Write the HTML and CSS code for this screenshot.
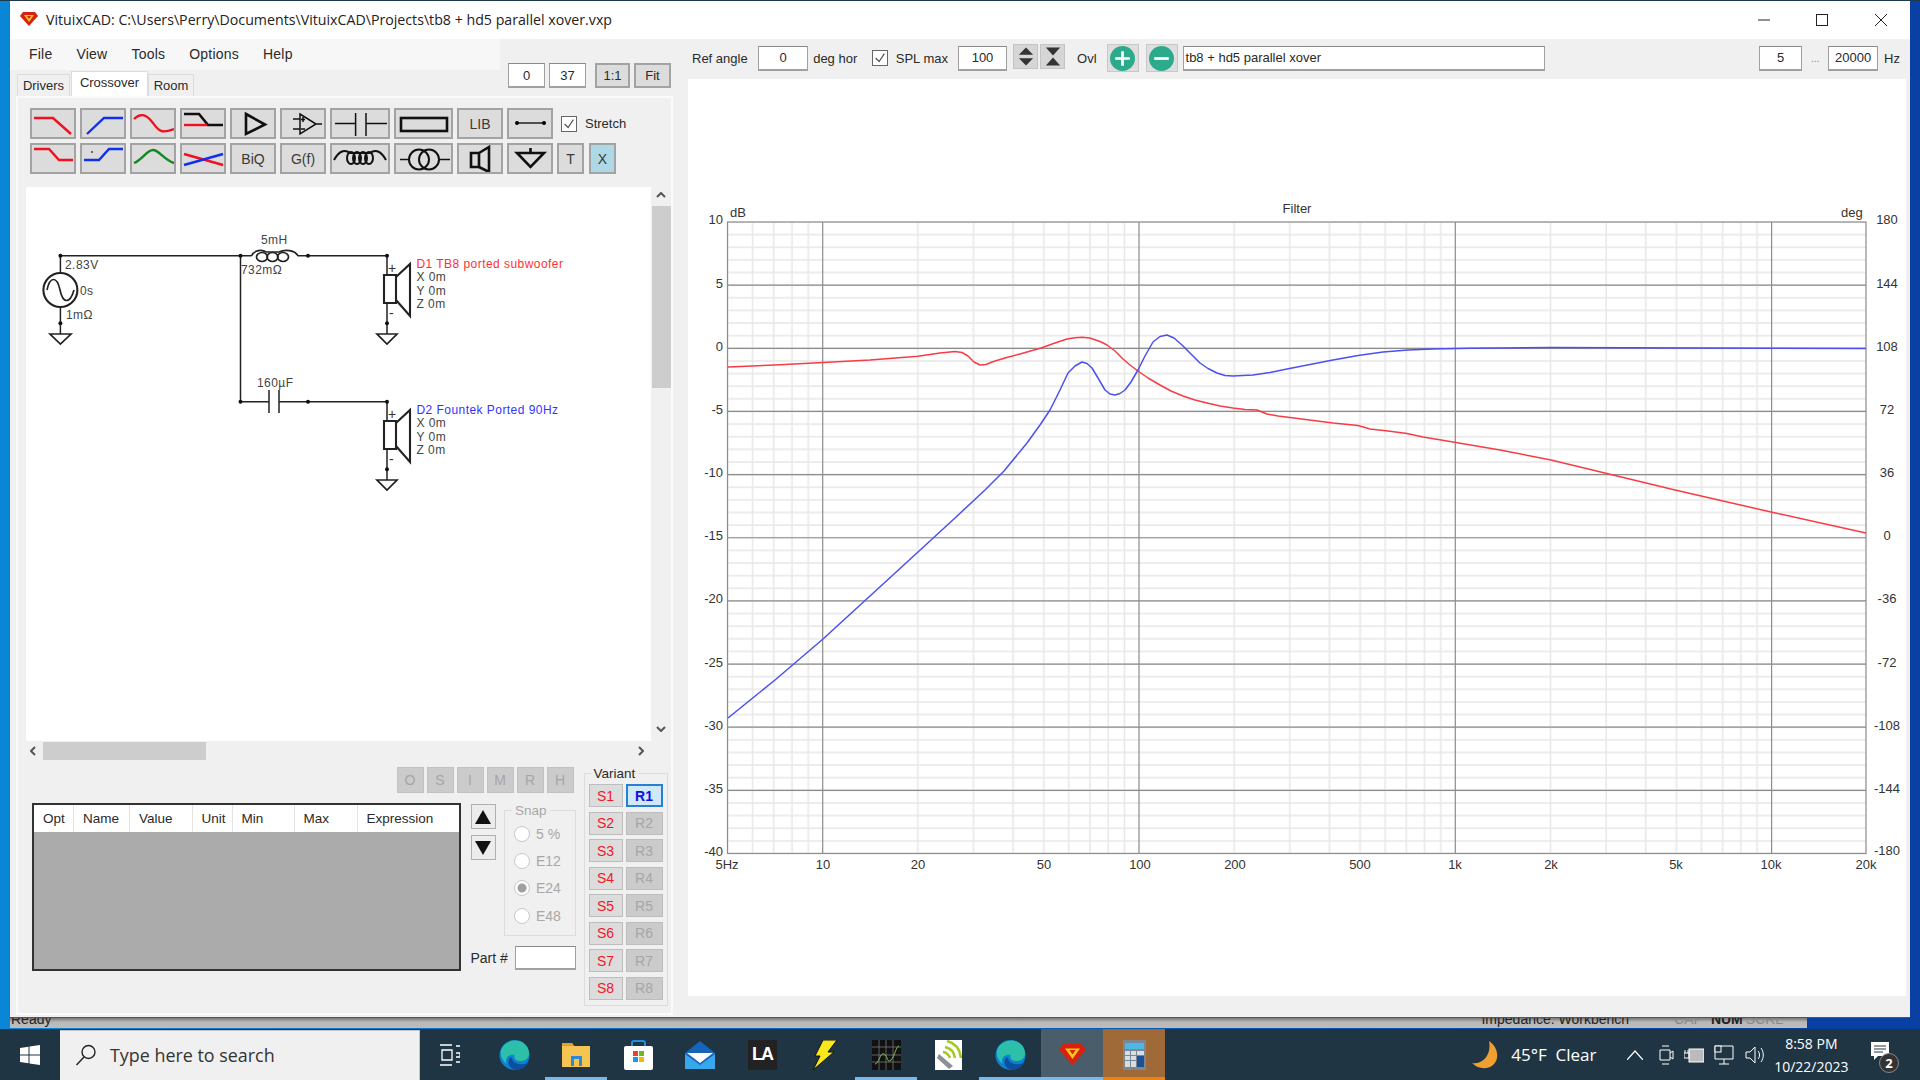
FILE: index.html
```html
<!DOCTYPE html>
<html lang="en">
<head>
<meta charset="utf-8">
<title>VituixCAD</title>
<link rel="stylesheet" href="styles.css">
</head>
<body>
<div class="desktop">
  <div class="window">
    <div class="titlebar">
      <svg class="app-icon" viewBox="0 0 18 14"><polygon points="3,0 15,0 18,4 9,14 0,4" fill="#d8200f"/><polygon points="4,3 14,3 9,10" fill="#f6c518"/><polygon points="7,4 11,4 9,7" fill="#d8200f"/></svg>
      <span class="title-text">VituixCAD: C:\Users\Perry\Documents\VituixCAD\Projects\tb8 + hd5 parallel xover.vxp</span>
      <div class="win-controls">
        <span class="win-btn"><svg viewBox="0 0 12 12" width="12" height="12"><path d="M0 6H12" stroke="#222"/></svg></span>
        <span class="win-btn"><svg viewBox="0 0 12 12" width="12" height="12"><rect x=".5" y=".5" width="11" height="11" fill="none" stroke="#222"/></svg></span>
        <span class="win-btn"><svg viewBox="0 0 12 12" width="12" height="12"><path d="M0 0L12 12M12 0L0 12" stroke="#222"/></svg></span>
      </div>
    </div>
    <div class="client">
      <section class="left">
        <div class="left-top">
          <div class="left-top-main">
            <nav class="menubar"><span>File</span><span>View</span><span>Tools</span><span>Options</span><span>Help</span></nav>
            <div class="tabs"><span class="tab">Drivers</span><span class="tab tab-active">Crossover</span><span class="tab tab-room">Room</span></div>
          </div>
          <div class="counters">
            <span class="field counter">0</span><span class="field counter">37</span>
            <span class="btn counter counter-gap">1:1</span><span class="btn counter">Fit</span>
          </div>
        </div>
        <div class="tabpanel">
          <div class="parts">
            <div class="parts-row">
              <span class="btn part"><svg viewBox="0 0 42 27"><path d="M2 8H21L39 24" class="s-red"/></svg></span>
              <span class="btn part"><svg viewBox="0 0 42 27"><path d="M5 24L22 8H41" class="s-blue"/></svg></span>
              <span class="btn part"><svg viewBox="0 0 42 27"><path d="M2 9C9 2 15 5 21 13S29 24 42 19" class="s-red"/></svg></span>
              <span class="btn part"><svg viewBox="0 0 42 27"><path d="M2 4H17L26 15H41" class="s-black"/><path d="M2 15H25" class="s-red"/></svg></span>
              <span class="btn part"><svg viewBox="0 0 42 27"><path d="M14 4L33 14.500L14 24Z" class="s-black"/></svg></span>
              <span class="btn part"><svg viewBox="0 0 42 27"><path d="M18 4L34 14L18 24ZM11 9H18M11 19H18M34 14H40M21 7V12M19 9.500H23M19 19H23" class="s-thin"/></svg></span>
              <span class="btn part part-w60"><svg viewBox="0 0 56 27"><path d="M3 13.500H23.600M34 13.500H55M23.600 3V26M34 3V26" class="s-thin"/></svg></span>
              <span class="btn part part-w59"><svg viewBox="0 0 55 27"><rect x="5" y="8" width="46" height="13" class="s-black"/></svg></span>
              <span class="btn part">LIB</span>
              <span class="btn part"><svg viewBox="0 0 42 27"><path d="M8 13H35" class="s-line"/><circle cx="8" cy="13" r="2"/><circle cx="35" cy="13" r="2"/></svg></span>
              <span class="check check-stretch"><svg viewBox="0 0 16 16"><path d="M3 8L7 12L13 3" fill="none" stroke="#555" stroke-width="1.400"/></svg></span>
              <span class="stretch-label">Stretch</span>
            </div>
            <div class="parts-row">
              <span class="btn part"><svg viewBox="0 0 42 27"><path d="M2 4H17L27 15H41" class="s-red"/></svg></span>
              <span class="btn part"><svg viewBox="0 0 42 27"><path d="M2 15H17L27 4H41" class="s-blue"/><circle cx="10" cy="7" r="1" fill="#444"/></svg></span>
              <span class="btn part"><svg viewBox="0 0 42 27"><path d="M2 18C10 15 15 5 21 5S32 15 42 18" class="s-green"/></svg></span>
              <span class="btn part"><svg viewBox="0 0 42 27"><path d="M2 9L41 20" class="s-red"/><path d="M2 20L41 9" class="s-blue"/></svg></span>
              <span class="btn part">BiQ</span>
              <span class="btn part">G(f)</span>
              <span class="btn part part-w60"><svg viewBox="0 0 56 27"><path d="M2 15C8 4 14 5 18 8H38C42 5 48 4 54 15" class="s-coil"/><ellipse cx="19" cy="13" rx="4" ry="6" class="s-coil"/><ellipse cx="25" cy="13" rx="4" ry="6" class="s-coil"/><ellipse cx="31" cy="13" rx="4" ry="6" class="s-coil"/><ellipse cx="37" cy="13" rx="4" ry="6" class="s-coil"/></svg></span>
              <span class="btn part part-w59"><svg viewBox="0 0 55 27"><path d="M4 14.500H13M43 14.500H54" class="s-thin"/><circle cx="23" cy="14.500" r="10" class="s-coil"/><circle cx="33" cy="14.500" r="10" class="s-coil"/></svg></span>
              <span class="btn part"><svg viewBox="0 0 42 27"><path d="M12 8H20V22H12ZM20 8L30 2V27L20 22" class="s-black"/></svg></span>
              <span class="btn part"><svg viewBox="0 0 42 27"><path d="M8 8H35L21.500 22ZM21.500 3V8" class="s-black"/></svg></span>
              <span class="btn part part-small">T</span>
              <span class="btn part part-small part-x">X</span>
            </div>
          </div>
          <div class="canvas-row">
            <div class="canvas">
              <svg class="schematic" viewBox="26 187 625 554" width="625" height="554">
                <g class="wires">
                  <path d="M60.400 255.700H251.500M298 255.700H387V275M240.500 255.700V401.700H269M279 401.700H387V421"/>
                  <path d="M60.400 255.700V273M60.400 307V334"/>
                  <path d="M387 303V334M387 449V480"/>
                  <path d="M50 334H71L60.400 344ZM377 334H397L387 344ZM377 480H397L387 490Z" class="w-bold"/>
                  <path d="M269 390V413M279 390V413"/>
                  <path d="M251.500 256C254 250 262 249 266 252H279C285 249 295 250 298 256" class="w-bold"/>
                  <ellipse cx="262" cy="257" rx="5.500" ry="4.500" class="w-bold"/><ellipse cx="272.500" cy="257" rx="5.500" ry="4.500" class="w-bold"/><ellipse cx="283" cy="257" rx="5.500" ry="4.500" class="w-bold"/>
                  <circle cx="60.400" cy="290" r="17" class="w-heavy"/>
                  <path d="M47 290C50 276 57 276 60 290S70 304 74 290" class="w-bold"/>
                  <path d="M384 275H396V303H384ZM396 277L410 264V316L396 300Z" class="w-heavy"/>
                  <path d="M384 421H396V449H384ZM396 423L410 410V462L396 446Z" class="w-heavy"/>
                </g>
                <g class="nodes">
                  <circle cx="60.400" cy="255.700" r="2"/><circle cx="240.500" cy="255.700" r="2"/><circle cx="308" cy="255.700" r="2"/><circle cx="387" cy="255.700" r="2"/>
                  <circle cx="240.500" cy="401.700" r="2"/><circle cx="308" cy="401.700" r="2"/><circle cx="387" cy="401.700" r="2"/>
                  <circle cx="60.400" cy="323.300" r="2"/><circle cx="387" cy="323.300" r="2"/><circle cx="387" cy="469.300" r="2"/>
                </g>
                <g class="sch-text">
                  <text x="65" y="269">2.83V</text><text x="80" y="295">0s</text><text x="66" y="319">1mΩ</text>
                  <text x="261" y="244">5mH</text><text x="241" y="274">732mΩ</text><text x="257" y="387">160µF</text>
                  <text x="388" y="273" class="t-sign">+</text><text x="389" y="318" class="t-sign">-</text><text x="388" y="419" class="t-sign">+</text><text x="389" y="464" class="t-sign">-</text>
                  <text x="416.500" y="268" class="t-red">D1 TB8 ported subwoofer</text>
                  <text x="416.500" y="281">X 0m</text><text x="416.500" y="295">Y 0m</text><text x="416.500" y="308">Z 0m</text>
                  <text x="416.500" y="414" class="t-blue">D2 Fountek Ported 90Hz</text>
                  <text x="416.500" y="427">X 0m</text><text x="416.500" y="441">Y 0m</text><text x="416.500" y="454">Z 0m</text>
                </g>
              </svg>
            </div>
            <div class="vscroll">
              <svg class="chev" viewBox="0 0 10 6"><path d="M1 5L5 1L9 5"/></svg>
              <div class="vthumb"></div>
              <svg class="chev" viewBox="0 0 10 6"><path d="M1 1L5 5L9 1"/></svg>
            </div>
          </div>
          <div class="hscroll">
            <svg class="chev-h" viewBox="0 0 6 10"><path d="M5 1L1 5L5 9"/></svg>
            <div class="hthumb"></div>
            <svg class="chev-h" viewBox="0 0 6 10"><path d="M1 1L5 5L1 9"/></svg>
          </div>
          <div class="bottom">
            <div class="b-left">
              <div class="flags"><span>O</span><span>S</span><span>I</span><span>M</span><span>R</span><span>H</span></div>
              <div class="b-main">
                <div class="grid-table">
                  <div class="grid-head"><span class="c-opt">Opt</span><span class="c-name">Name</span><span class="c-val">Value</span><span class="c-unit">Unit</span><span class="c-min">Min</span><span class="c-max">Max</span><span class="c-exp">Expression</span></div>
                </div>
                <div class="b-side">
                  <div class="b-side-top">
                    <div class="arrows">
                      <span class="arrow-btn"><svg viewBox="0 0 16 14"><path d="M8 0L16 14H0Z"/></svg></span>
                      <span class="arrow-btn"><svg viewBox="0 0 16 14"><path d="M0 0H16L8 14Z"/></svg></span>
                    </div>
                    <fieldset class="snap">
                      <legend>Snap</legend>
                      <label><i class="radio"></i>5 %</label>
                      <label><i class="radio"></i>E12</label>
                      <label><i class="radio radio-on"></i>E24</label>
                      <label><i class="radio"></i>E48</label>
                    </fieldset>
                  </div>
                  <div class="part-row"><span>Part #</span><span class="field part-input"></span></div>
                </div>
              </div>
            </div>
            <fieldset class="variant">
              <legend>Variant</legend>
              <div class="variant-grid">
                <span class="v-s">S1</span><span class="v-r1">R1</span>
                <span class="v-s">S2</span><span class="v-r">R2</span>
                <span class="v-s">S3</span><span class="v-r">R3</span>
                <span class="v-s">S4</span><span class="v-r">R4</span>
                <span class="v-s">S5</span><span class="v-r">R5</span>
                <span class="v-s">S6</span><span class="v-r">R6</span>
                <span class="v-s">S7</span><span class="v-r">R7</span>
                <span class="v-s">S8</span><span class="v-r">R8</span>
              </div>
            </fieldset>
          </div>
        </div>
      </section>
      <section class="right">
        <div class="plot-toolbar">
          <span>Ref angle</span>
          <span class="field f-ref">0</span>
          <span class="ml5">deg hor</span>
          <span class="check check-spl"><svg viewBox="0 0 16 16"><path d="M3 8L7 12L13 3" fill="none" stroke="#555" stroke-width="1.400"/></svg></span>
          <span class="ml8">SPL max</span>
          <span class="field f-spl">100</span>
          <span class="spin spin-first"><svg viewBox="0 0 18 20"><path d="M9 0L17 8H1ZM1 12H17L9 20Z"/></svg></span>
          <span class="spin"><svg viewBox="0 0 18 20"><path d="M1 0H17L9 9ZM9 11L17 20H1Z"/></svg></span>
          <span class="ovl">Ovl</span>
          <span class="round-btn"><svg viewBox="0 0 24 24"><circle cx="12" cy="12" r="12"/><path d="M12 5V19M5 12H19"/></svg></span>
          <span class="round-btn round-second"><svg viewBox="0 0 24 24"><circle cx="12" cy="12" r="12"/><path d="M5 12H19"/></svg></span>
          <span class="field f-name">tb8 + hd5 parallel xover</span>
          <span class="field f-lo">5</span>
          <span class="dots">...</span>
          <span class="field f-hi">20000</span>
          <span class="ml6">Hz</span>
        </div>
        <div class="plot">
          <svg viewBox="688 79 1218 917" width="1218" height="917">
            <defs>
              <pattern id="minor-h" patternUnits="userSpaceOnUse" x="0" y="221" width="20" height="12.630"><path d="M0 1H20" stroke="#e8e8e8" stroke-width="1.600"/></pattern>
              <pattern id="minor-v" patternUnits="userSpaceOnUse" x="821.700" y="0" width="316.300" height="20"><path d="M96.200 0V20M151.900 0V20M191.400 0V20M222.100 0V20M247.100 0V20M268.300 0V20M286.600 0V20M302.800 0V20" stroke="#e8e8e8" stroke-width="1.600"/></pattern>
            </defs>
            <rect x="727.500" y="222" width="1138.500" height="631.500" fill="url(#minor-h)"/>
            <rect x="727.500" y="222" width="1138.500" height="631.500" fill="url(#minor-v)"/>
            <path d="M727.500 285.150H1866M727.500 348.300H1866M727.500 411.450H1866M727.500 474.600H1866M727.500 537.750H1866M727.500 600.900H1866M727.500 664.050H1866M727.500 727.200H1866M727.500 790.350H1866M822.700 222V853.500M1139 222V853.500M1455.300 222V853.500M1771.600 222V853.500" stroke="#8c8c8c" stroke-width="1.200" fill="none"/>
            <rect x="727.500" y="222" width="1138.500" height="631.500" fill="none" stroke="#8c8c8c" stroke-width="1.200"/>
            <polyline class="curve-red" points="728,367 775,365 823,362.500 870,360 918,356.300 940,353 955,351.400 962,352.500 968,356 974,362 980,365 986,364.500 992,362 1005,358 1020,354 1041,348 1055,343 1067,339 1075,337.700 1082,337.300 1090,338 1100,341.500 1107,345 1115,351 1123,359 1130,365 1138,371 1148,378 1160,385 1171,391 1183,396 1195,400 1207,403 1220,406 1233,408 1245,409.500 1257,410 1267,414 1278,416 1290,417.500 1333,423 1358,425.500 1370,429 1388,431 1407,433.500 1423,437 1453,442 1500,450 1551,460 1613,475 1675,490 1771,512 1866,533"/>
            <polyline class="curve-blue" points="728,718 775,680 823,639 870,596 918,552 955,518 985,490 1004,471 1027,443 1040,425 1050,410 1060,390 1068,373 1075,366 1082,362 1087,363.500 1092,368 1098,378 1105,390 1110,394 1115,395 1120,393.500 1125,390 1131,382 1138,370 1145,356 1153,342 1160,336.500 1167,335 1174,338 1182,345 1191,354 1200,363 1208,368.500 1217,373 1225,375.500 1233,376 1253,375 1270,372.500 1287,369 1310,364.500 1333,360 1358,355.500 1383,352 1408,350 1433,349 1470,348.300 1551,347.500 1700,348 1866,348.500"/>
            <g class="axis axis-left">
              <text x="723" y="224">10</text><text x="723" y="288">5</text><text x="723" y="351">0</text><text x="723" y="414">-5</text><text x="723" y="477">-10</text><text x="723" y="540">-15</text><text x="723" y="603">-20</text><text x="723" y="667">-25</text><text x="723" y="730">-30</text><text x="723" y="793">-35</text><text x="723" y="856">-40</text>
            </g>
            <g class="axis axis-right">
              <text x="1887" y="224">180</text><text x="1887" y="288">144</text><text x="1887" y="351">108</text><text x="1887" y="414">72</text><text x="1887" y="477">36</text><text x="1887" y="540">0</text><text x="1887" y="603">-36</text><text x="1887" y="667">-72</text><text x="1887" y="730">-108</text><text x="1887" y="793">-144</text><text x="1887" y="855">-180</text>
            </g>
            <g class="axis axis-x">
              <text x="727" y="869">5Hz</text><text x="823" y="869">10</text><text x="918" y="869">20</text><text x="1044" y="869">50</text><text x="1140" y="869">100</text><text x="1235" y="869">200</text><text x="1360" y="869">500</text><text x="1455" y="869">1k</text><text x="1551" y="869">2k</text><text x="1676" y="869">5k</text><text x="1771" y="869">10k</text><text x="1866" y="869">20k</text>
            </g>
            <g class="axis">
              <text x="730" y="217">dB</text><text x="1297" y="213" class="center">Filter</text><text x="1841" y="217">deg</text>
            </g>
          </svg>
        </div>
      </section>
    </div>
  </div>
  <div class="status-strip">
    <span class="st-ready">Ready</span>
    <span class="st-imp">Impedance: Workbench</span>
    <span class="st-cap">CAP</span><span class="st-num">NUM</span><span class="st-cap">SCRL</span>
  </div>
</div>
<footer class="taskbar">
  <span class="start"><svg viewBox="0 0 20 20" width="20" height="20"><path d="M0 3L8.500 1.800V9.500H0ZM9.500 1.600L20 0V9.500H9.500ZM0 10.500H8.500V18.200L0 17ZM9.500 10.500H20V20L9.500 18.400Z" fill="#fff"/></svg></span>
  <div class="search">
    <svg viewBox="0 0 22 22" width="22" height="22"><circle cx="13.500" cy="8" r="6.500" fill="none" stroke="#222" stroke-width="1.400"/><path d="M9 13L1.500 21" stroke="#222" stroke-width="1.400"/></svg>
    <span>Type here to search</span>
  </div>
  <span class="taskview"><svg viewBox="0 0 20 22" width="20" height="22"><path d="M0 1H12M0 21H12M2 6H12V16H2ZM16 2H20M16 9H20V13H16M16 18H20" fill="none" stroke="#fff" stroke-width="1.300"/></svg></span>
  <div class="apps">
    <span class="app"><svg viewBox="0 0 30 30" width="31" height="30"><circle cx="15" cy="15" r="15" fill="#0f80cf"/><path d="M2 9C7-2 25-3 29 10C31 17 27 21 21 21C16 21 14 18 15 15C10 14 5 17 7 24C2 20 0 14 2 9Z" fill="#2cc0a8"/><path d="M16 30C8 28 7 20 12 17C13 22 17 25 24 24C27 24 29 22 29 22C27 27 22 30 16 30Z" fill="#0b4f9e"/></svg></span>
    <span class="app app-on"><svg viewBox="0 0 28 24" width="28" height="24"><path d="M0 0H10L12 3H28V24H0Z" fill="#f5c451"/><path d="M0 0H10L12 3H0Z" fill="#e0a030"/><rect x="9" y="13" width="11" height="10" fill="#2a8ad8"/><rect x="12" y="16" width="5" height="7" fill="#f5c451"/></svg></span>
    <span class="app"><svg viewBox="0 0 29 30" width="29" height="30"><path d="M8 7V3Q8 1 10 1H19Q21 1 21 3V7" fill="none" stroke="#1f8fe0" stroke-width="2"/><rect y="6" width="29" height="24" rx="2" fill="#fff"/><rect x="9" y="11" width="5" height="5" fill="#e8442a"/><rect x="15" y="11" width="5" height="5" fill="#70b820"/><rect x="9" y="17" width="5" height="5" fill="#1c9ae0"/><rect x="15" y="17" width="5" height="5" fill="#f5b800"/></svg></span>
    <span class="app"><svg viewBox="0 0 30 28" width="30" height="28"><path d="M15 0L30 12V28H0V12Z" fill="#1565b8"/><path d="M2 12H28L15 22Z" fill="#fff"/><path d="M0 13L15 24L30 13V28H0Z" fill="#38a8ec"/></svg></span>
    <span class="app"><span class="la-icon">LA</span></span>
    <span class="app"><svg viewBox="0 0 25 30" width="25" height="30"><path d="M11 0H25L16 12H22L1 30L8 16H3Z" fill="#f7e81c" stroke="#111" stroke-width="1"/></svg></span>
    <span class="app app-on"><svg viewBox="0 0 29 30" width="29" height="30"><rect width="29" height="30" fill="#111"/><path d="M7 0V30M14 0V30M21 0V30M0 7H29M0 15H29M0 22H29" stroke="#777" stroke-width=".8"/><path d="M3 24C7 24 8 12 12 14S15 24 19 20S24 6 27 6" fill="none" stroke="#7fc060" stroke-width="1"/></svg></span>
    <span class="app"><svg viewBox="0 0 27 30" width="27" height="30"><rect width="27" height="30" fill="#fff"/><path d="M12 1C20 3 25 9 26 18M10 7C15 8 19 12 20 18M8 12C11 12 14 15 15 18" fill="none" stroke="#a4c820" stroke-width="2.500"/><path d="M4 14L18 26L14 29L2 18Z" fill="#8a9298"/></svg></span>
    <span class="app app-on"><svg viewBox="0 0 30 30" width="31" height="30"><circle cx="15" cy="15" r="15" fill="#0f80cf"/><path d="M2 9C7-2 25-3 29 10C31 17 27 21 21 21C16 21 14 18 15 15C10 14 5 17 7 24C2 20 0 14 2 9Z" fill="#2cc0a8"/><path d="M16 30C8 28 7 20 12 17C13 22 17 25 24 24C27 24 29 22 29 22C27 27 22 30 16 30Z" fill="#0b4f9e"/></svg></span>
    <span class="app app-on app-active"><svg viewBox="0 0 18 14" width="27" height="21"><polygon points="3,0 15,0 18,4 9,14 0,4" fill="#d8200f"/><polygon points="4,3 14,3 9,10" fill="#f6c518"/><polygon points="7,4 11,4 9,7" fill="#d8200f"/></svg></span>
    <span class="app app-calc"><svg viewBox="0 0 23 30" width="23" height="30"><rect width="23" height="30" fill="#7a8794"/><rect x="2" y="3" width="19" height="6" fill="#4cb8e8"/><path d="M2 11H7V15H2ZM8 11H13V15H8ZM14 11H21V15H14ZM2 16H7V20H2ZM8 16H13V20H8ZM2 21H7V27H2ZM8 21H13V27H8Z" fill="#d8dde2"/><rect x="14" y="16" width="7" height="11" fill="#1f4f90"/></svg></span>
  </div>
  <div class="tray">
    <svg class="moon" viewBox="0 0 28 28" width="28" height="28"><path d="M17 0C26 6 28 18 21 24C15 29 6 28 0 22C10 24 20 14 17 0Z" fill="#f0a030"/></svg>
    <span class="weather">45°F&nbsp; Clear</span>
    <svg class="chevron" viewBox="0 0 16 10" width="16" height="10"><path d="M0 10L8 1L16 10" fill="none" stroke="#fff" stroke-width="1.200"/></svg>
    <svg viewBox="0 0 15 20" width="15" height="20"><path d="M1 5H11V15H1ZM11 8L14 6V14L11 12M3 1H10M3 19H10" fill="none" stroke="#fff"/></svg>
    <svg class="tray-gap1" viewBox="0 0 20 16" width="20" height="16"><rect x="5" y="2" width="15" height="13" fill="#bbb" stroke="#fff"/><path d="M0 6H5V11H0ZM1 3V6M4 3V6" fill="none" stroke="#fff"/></svg>
    <svg class="tray-gap1" viewBox="0 0 20 20" width="20" height="20"><path d="M1 1H19V14H1ZM10 14V19M5 19H15" fill="none" stroke="#fff"/><rect x="1" y="1" width="6" height="6" fill="#1f3543" stroke="#fff"/></svg>
    <svg class="tray-gap2" viewBox="0 0 21 20" width="21" height="20"><path d="M1 7H5L10 2V18L5 13H1ZM13 6C15 8 15 12 13 14M16 3C19 7 19 13 16 17" fill="none" stroke="#fff"/></svg>
    <div class="clock"><span>8:58 PM</span><span>10/22/2023</span></div>
    <span class="notify">
      <svg viewBox="0 0 18 18" width="18" height="18"><path d="M0 0H18V14H7L3 18V14H0Z" fill="#fff"/><path d="M3 4H15M3 7H15M3 10H12" stroke="#1f3543"/></svg>
      <b class="badge">2</b>
    </span>
  </div>
</footer>
</body>
</html>
```

FILE: styles.css
```css
* { box-sizing: border-box; }
html, body { margin: 0; padding: 0; }
body {
  width: 1920px; height: 1080px; overflow: hidden;
  font: 13px "Liberation Sans", Arial, sans-serif; color: #2a2a2a;
  background: #1f3543;
}
.desktop {
  height: 1029px; padding: 1px 10px 0 9px;
  display: flex; flex-direction: column;
  border-top: 1px solid #1c3a4a;
  background: linear-gradient(90deg, #0a86d6 0, #0a86d6 1%, #0a3fa4 94%, #0a3fa4 100%);
}
.window { width: 1901px; height: 1017px; margin-top: -1px; flex: none; display: flex; flex-direction: column; background: #f0f0f0; border-left: 1px solid #666; border-bottom: 1px solid #555; }

.titlebar { height: 38px; flex: none; background: #fff; display: flex; align-items: center; padding-left: 10px; }
.app-icon { width: 18px; height: 14px; margin-top: -2px; }
.title-text { margin: -2px 0 0 8px; font: 14.200px "Open Sans", sans-serif; color: #222; }
.win-controls { margin-left: auto; display: flex; }
.win-btn { width: 58.500px; display: flex; justify-content: center; }

.client { flex: 1; display: flex; min-height: 0; }
.left { width: 678px; flex: none; display: flex; flex-direction: column; }
.right { flex: 1; display: flex; flex-direction: column; min-width: 0; }

.left-top { height: 57px; flex: none; display: flex; justify-content: space-between; }
.menubar { width: 490px; height: 31px; background: #f7f7f7; display: flex; align-items: center; gap: 24px; padding: 0 0 2px 19px; font-size: 14px; letter-spacing: .22px; }
.tabs { display: flex; align-items: flex-end; height: 26px; padding-left: 7px; }
.tab { width: 53px; height: 22px; background: #f0f0f0; border: 1px solid #dcdcdc; border-bottom: 0; text-align: center; line-height: 22px; }
.tab-active { width: 77px; height: 25px; background: #fff; margin-left: 1px; line-height: 21px; }
.tab-room { width: 46px; }
.counters { display: flex; gap: 4px; padding: 24px 17px 0 0; }
.counter { width: 37px; height: 25px; display: flex; align-items: center; justify-content: center; }
.counter-gap { margin-left: 5px; width: 35px; }
.field { background: #fff; border: 1px solid #a0a0a0; border-top-color: #8a8a8a; border-bottom-width: 2px; display: flex; align-items: center; justify-content: center; }
.btn { background: #dcdcdc; border: 2px solid #a3a3a3; display: flex; align-items: center; justify-content: center; }

.tabpanel { width: 657px; height: 919px; margin-left: 6px; border: 2px solid #fafafa; background: #f0f0f0; display: flex; flex-direction: column; }
.parts { height: 89px; flex: none; padding: 10px 0 0 12px; display: flex; flex-direction: column; gap: 4px; }
.parts-row { display: flex; gap: 4px; }
.part { width: 46px; height: 31px; font-size: 14px; color: #3a3a3a; }
.part svg { width: 100%; height: 100%; }
.part-w60 { width: 60px; }
.part-w59 { width: 59px; }
.part-small { width: 27px; }
.part-x { background: #add8e6; margin-left: 1px; }
.s-red, .s-blue, .s-green, .s-black, .s-thin, .s-line, .s-coil { fill: none; stroke-width: 2.400; }
.s-red { stroke: #f01020; }
.s-blue { stroke: #1030f0; }
.s-green { stroke: #108a20; }
.s-black { stroke: #101010; stroke-width: 2.600; }
.s-thin { stroke: #101010; stroke-width: 1.500; }
.s-line { stroke: #101010; stroke-width: 1.400; }
.s-coil { stroke: #101010; stroke-width: 2; }
.check { width: 16px; height: 16px; background: #fff; border: 1px solid #666; display: flex; flex: none; }
.check svg { width: 100%; height: 100%; }
.check-stretch { margin: 8px 0 0 4px; }
.stretch-label { margin: 8px 0 0 4px; line-height: 16px; }

.canvas-row { display: flex; margin-left: 8px; height: 554px; flex: none; }
.canvas { width: 625px; background: #fff; }
.schematic { display: block; }
.wires { fill: none; stroke: #222; stroke-width: 1.500; }
.w-bold { stroke-width: 1.700; }
.w-heavy { stroke-width: 2.100; }
.nodes { fill: #111; }
.sch-text { font: 12px "Liberation Sans", sans-serif; letter-spacing: .45px; fill: #444; }
.t-sign { font-size: 14px; fill: #333; }
.t-red { fill: #ff3030; }
.t-blue { fill: #3333ff; }
.vscroll { width: 20px; display: flex; flex-direction: column; align-items: center; }
.vthumb { width: 19px; height: 182px; background: #cdcdcd; margin: 8px 0 auto; }
.chev { width: 10px; height: 6px; margin-top: 5px; flex: none; fill: none; stroke: #555; stroke-width: 2; }
.vscroll .chev:last-child { margin-bottom: 9px; }
.hscroll { width: 625px; height: 18px; margin: 1px 0 0 8px; flex: none; display: flex; align-items: center; padding: 0 7px 0 4px; }
.hthumb { width: 163px; height: 18px; background: #cdcdcd; margin: 0 auto 0 7px; }
.chev-h { width: 6px; height: 10px; fill: none; stroke: #555; stroke-width: 2; flex: none; }

.bottom { flex: 1; display: flex; padding-left: 14px; min-height: 0; }
.b-left { width: 544px; flex: none; }
.flags { height: 26px; margin-top: 7px; display: flex; justify-content: flex-end; gap: 3px; padding-right: 2.500px; }
.flags span { width: 27px; background: #cbcbcb; border: 1px solid #c2c2c2; color: #a6a6a6; font-size: 14px; display: flex; align-items: center; justify-content: center; }
.b-main { display: flex; margin-top: 10px; }
.grid-table { width: 429px; height: 168px; background: #ababab; border: 2px solid #333; flex: none; }
.grid-head { height: 27px; background: #fff; display: flex; line-height: 27px; font-size: 13.500px; }
.grid-head span { border-right: 1px solid #e4e4e4; padding-left: 9px; }
.c-opt { width: 40px; } .c-name { width: 56px; } .c-val { width: 62.500px; } .c-unit { width: 40px; } .c-min { width: 62px; } .c-max { width: 63px; } .c-exp { flex: 1; border-right: 0 !important; }
.b-side { width: 105.500px; margin-left: 9.500px; flex: none; }
.b-side-top { display: flex; }
.arrows { width: 25.500px; flex: none; display: flex; flex-direction: column; gap: 6px; margin-top: 1px; }
.arrow-btn { height: 25px; border: 1px solid #b0b0b0; background: #ececec; display: flex; align-items: center; justify-content: center; }
.arrow-btn svg { width: 16px; height: 14px; fill: #111; }
.snap { width: 72px; height: 133px; margin: 0 0 0 8px; padding: 2px 0 0 9px; border: 1px solid #dcdcdc; color: #a8a8a8; display: flex; flex-direction: column; }
.snap legend { margin-left: -2px; padding: 0 3px; font-size: 13.500px; line-height: 15px; }
.snap label { height: 27.300px; display: flex; align-items: center; gap: 6px; font-size: 14px; }
.radio { width: 16px; height: 16px; border-radius: 50%; background: #fff; border: 1px solid #c8c8c8; flex: none; }
.radio-on { background: radial-gradient(circle, #a0a0a0 0 4px, #fff 5px); }
.part-row { display: flex; justify-content: space-between; align-items: center; margin-top: 10px; height: 24px; font-size: 14px; }
.part-input { width: 61px; height: 24px; }

.variant { width: 84.500px; height: 240px; margin: 6px 0 0 7.500px; padding: 3px 0 0 4px; border: 1px solid #dcdcdc; flex: none; }
.variant legend { margin-left: 2px; padding: 0 3px; font-size: 13.500px; line-height: 15px; }
.variant-grid { display: grid; grid-template-columns: 34px 37px; column-gap: 3px; grid-auto-rows: 23px; row-gap: 4.550px; font-size: 14px; }
.variant-grid span { display: flex; align-items: center; justify-content: center; border: 1px solid #bdbdbd; }
.v-s { background: #dcdcdc; color: #f01828; }
.v-r { background: #cbcbcb; color: #a6a6a6; }
.v-r1 { background: #cfe8fa; color: #1010e0; font-weight: 700; border: 2px solid #2a80d0 !important; }

.plot-toolbar { height: 40px; flex: none; display: flex; align-items: center; padding: 0 10px 2px 4px; }
.f-ref { width: 50px; height: 25px; margin-left: 10.500px; }
.ml5 { margin-left: 5px; }
.ml6 { margin-left: 6px; }
.ml8 { margin-left: 8px; }
.check-spl { margin-left: 14.500px; }
.f-spl { width: 49px; height: 25px; margin-left: 10px; }
.spin { width: 25px; height: 25px; background: #d6d6d6; border: 1px solid #c4c4c4; display: flex; align-items: center; justify-content: center; margin-left: 2px; margin-top: -3px; }
.spin svg { width: 16px; height: 19px; fill: #333; }
.spin-first { margin-left: 6px; }
.ovl { margin-left: 12px; }
.round-btn { width: 32px; height: 28px; margin-left: 10px; background: #dedede; border: 1px solid #c8c8c8; display: flex; align-items: center; justify-content: center; }
.round-btn svg { width: 25px; height: 25px; fill: #2bab8c; stroke: #fff; stroke-width: 2.600; }
.round-btn circle { stroke: none; }
.round-second { margin-left: 7px; }
.f-name { width: 362px; height: 25px; margin-left: 5px; justify-content: flex-start; padding-left: 2px; }
.f-lo { width: 43px; height: 25px; margin-left: auto; }
.dots { width: 26px; text-align: center; font-size: 10px; color: #888; }
.f-hi { width: 50px; height: 25px; }

.plot { width: 1218px; height: 917px; flex: none; background: #fff; }
.plot svg { display: block; }
.curve-red, .curve-blue { fill: none; stroke-width: 1.500; stroke-linejoin: round; }
.curve-red { stroke: #f73c46; }
.curve-blue { stroke: #4c50ef; }
.axis { font: 13px "Liberation Sans", sans-serif; fill: #333; }
.axis-left { text-anchor: end; }
.axis-right, .axis-x, .center { text-anchor: middle; }

.status-strip { flex: none; width: 1797px; height: 10px; margin-left: 1px; overflow: hidden; background: linear-gradient(#777, #b8b8b8 40%, #bdbdbd); display: flex; line-height: 4px; font-size: 14px; color: #222; }
.status-strip span { margin-top: -1px; }
.st-ready { margin-left: 1px; }
.st-imp { margin-left: 1430px; }
.st-cap { margin-left: 3px; color: #888; }
.st-cap:nth-of-type(3) { margin-left: 45px; }
.st-num { margin-left: 8px; font-weight: 700; }

.taskbar { height: 51px; display: flex; background: #1f3543; color: #fff; }
.start { width: 60px; display: flex; align-items: center; justify-content: center; }
.search { width: 360px; height: 50px; margin-top: 1px; background: #f0f0f0; border: 1px solid #c4c4c4; border-width: 1px 1px 0 0; display: flex; align-items: center; padding: 0 0 2px 15px; gap: 13px; color: #333; font: 17.900px "Open Sans", sans-serif; }
.taskview { width: 63px; display: flex; align-items: center; justify-content: center; padding-right: 4px; }
.apps { display: flex; }
.app { width: 62px; height: 51px; display: flex; align-items: center; justify-content: center; }
.app-on { box-shadow: inset 0 -3px 0 #76b9ed; }
.app-active { background: #4a5d6b; }
.app-calc { background: #a06a38; box-shadow: inset 0 -3px 0 #f08010; }
.la-icon { width: 29px; height: 30px; background: #222; color: #fff; font: 700 18px "Liberation Sans", sans-serif; letter-spacing: -2px; display: flex; align-items: center; justify-content: center; }
.tray { margin-left: auto; display: flex; align-items: center; gap: 9px; padding-right: 31px; }
.moon { margin-right: 2px; }
.weather { font: 17px "Open Sans", sans-serif; margin-right: 21px; white-space: nowrap; }
.chevron { margin-right: 7px; }
.tray-gap1 { margin-left: 1.200px; }
.tray-gap2 { margin-left: 2.300px; }
.clock { display: flex; flex-direction: column; align-items: center; margin: 1px 13.500px 0 -1px; font: 14px/23px "Open Sans", sans-serif; }
.notify { position: relative; width: 18px; height: 18px; margin: -8px 0 0 0; display: block; }
.notify svg { display: block; }
.badge { position: absolute; left: 8px; top: 11px; width: 20px; height: 20px; border-radius: 50%; background: #333; border: 1px solid #888; font: 700 13px/18px "Open Sans", sans-serif; text-align: center; color: #fff; }
```
